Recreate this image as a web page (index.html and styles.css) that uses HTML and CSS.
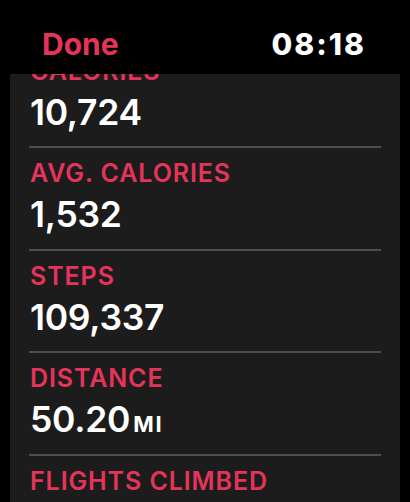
FILE: index.html
```html
<!DOCTYPE html>
<html>
<head>
<meta charset="utf-8">
<link rel="stylesheet" href="styles.css">
</head>
<body>
<header class="bar">
  <span class="done">Done</span>
  <span class="time">08:18</span>
</header>
<main class="card">
  <div class="list">
    <div class="row">
      <div class="label">CALORIES</div>
      <div class="value">10,724</div>
    </div>
    <div class="row">
      <div class="label">AVG. CALORIES</div>
      <div class="value">1,532</div>
    </div>
    <div class="row">
      <div class="label">STEPS</div>
      <div class="value">109,337</div>
    </div>
    <div class="row">
      <div class="label">DISTANCE</div>
      <div class="value">50.20<span class="unit">MI</span></div>
    </div>
    <div class="row">
      <div class="label">FLIGHTS CLIMBED</div>
      <div class="value">12</div>
    </div>
  </div>
</main>
</body>
</html>
```
FILE: styles.css
```css
html, body {
  margin: 0;
  padding: 0;
  background: #000;
  width: 410px;
  height: 502px;
  overflow: hidden;
  font-family: Inter, "Liberation Sans", sans-serif;
}
.bar {
  height: 74px;
  box-sizing: border-box;
  padding: 26px 44px 0 42px;
  display: flex;
  justify-content: space-between;
  align-items: flex-start;
  font-size: 30px;
  line-height: 36px;
  font-weight: 700;
}
.done {
  color: #e5345a;
}
.time {
  color: #fff;
  font-weight: 800;
  letter-spacing: 2px;
}
.card {
  margin: 0 10px;
  height: 428px;
  background: #1c1c1c;
  overflow: hidden;
}
.list {
  margin-top: -28px;
  padding: 0 19px;
}
.row {
  padding: 10px 0 13.4px 1px;
  border-bottom: 2px solid #4d4d4d;
}
.label {
  color: #e5345a;
  font-size: 25px;
  line-height: 30px;
  font-weight: 600;
  letter-spacing: 0.9px;
}
.value {
  color: #fff;
  margin-top: 7px;
  font-size: 35.5px;
  line-height: 40px;
  font-weight: 600;
  letter-spacing: -0.3px;
}
.unit {
  font-size: 22px;
  line-height: 0;
  font-weight: 700;
  letter-spacing: 2px;
  margin-left: 3px;
}
```
